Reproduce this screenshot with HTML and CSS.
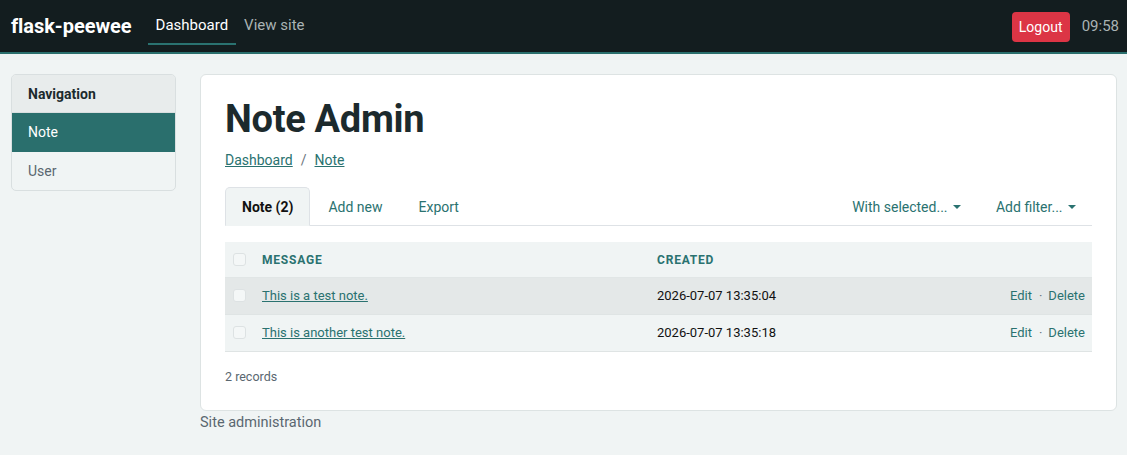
FILE: index.html
```html
<!DOCTYPE html>
<html>
<head>
<meta charset="utf-8">
<link rel="stylesheet" href="styles.css">
</head>
<body>
<header class="topbar">
  <div class="brand">flask-peewee</div>
  <nav class="topnav">
    <a class="toplink active">Dashboard</a>
    <a class="toplink">View site</a>
  </nav>
  <div class="topright">
    <button class="logout">Logout</button>
    <span class="clock">09:58</span>
  </div>
</header>
<div class="page">
  <aside class="sidebar">
    <div class="side-head">Navigation</div>
    <a class="side-item active">Note</a>
    <a class="side-item">User</a>
  </aside>
  <div class="main">
    <section class="card">
      <h1 class="title">Note Admin</h1>
      <div class="crumbs"><a class="crumb">Dashboard</a><span class="sep">/</span><a class="crumb">Note</a></div>
      <div class="tabs">
        <a class="tab active">Note (2)</a>
        <a class="tab">Add new</a>
        <a class="tab">Export</a>
        <span class="spacer"></span>
        <a class="tab drop">With selected... <span class="caret"></span></a>
        <a class="tab drop">Add filter... <span class="caret"></span></a>
      </div>
      <table class="grid">
        <thead>
          <tr><th class="cb"><span class="box"></span></th><th class="msg">Message</th><th class="created">Created</th><th class="acts"></th></tr>
        </thead>
        <tbody>
          <tr class="hover"><td class="cb"><span class="box"></span></td><td class="msg"><a class="link">This is a test note.</a></td><td class="created">2026-07-07 13:35:04</td><td class="acts"><a class="act">Edit</a><span class="dot">·</span><a class="act">Delete</a></td></tr>
          <tr><td class="cb"><span class="box"></span></td><td class="msg"><a class="link">This is another test note.</a></td><td class="created">2026-07-07 13:35:18</td><td class="acts"><a class="act">Edit</a><span class="dot">·</span><a class="act">Delete</a></td></tr>
        </tbody>
      </table>
      <div class="count">2 records</div>
    </section>
    <footer class="foot">Site administration</footer>
  </div>
</div>
</body>
</html>
```
FILE: styles.css
```css
* { box-sizing: border-box; }
html, body { margin: 0; padding: 0; }
body {
  font-family: Roboto, "Liberation Sans", sans-serif;
  font-size: 14px;
  color: #212529;
  background: #f0f4f4;
  height: 455px;
  overflow: hidden;
}
a { text-decoration: none; cursor: pointer; }

.topbar {
  height: 54px;
  background: #131d1f;
  border-bottom: 2px solid #2a6f6d;
  display: flex;
  align-items: center;
  padding: 0 8px 0 11px;
}
.brand {
  color: #fff;
  font-size: 20px;
  font-weight: 700;
  margin-right: 16px;
  letter-spacing: -0.05px;
}
.topnav { display: flex; align-self: stretch; }
.toplink {
  color: #aab3b4;
  font-size: 15px;
  padding: 0 8px;
  display: flex;
  align-items: center;
  height: 45px;
  padding-top: 6px;
  border-bottom: 2px solid transparent;
  align-self: flex-start;
}
.toplink.active { color: #fff; border-bottom-color: #2a7270; }
.topright { margin-left: auto; display: flex; align-items: center; gap: 12px; }
.logout {
  background: #dc3545;
  color: #fff;
  border: 0;
  border-radius: 4px;
  font-family: inherit;
  font-size: 14px;
  height: 30px;
  width: 58px;
  padding: 0;
  margin-top: 1px;
}
.clock { color: #aab3b4; font-size: 15px; }

.page {
  display: flex;
  align-items: flex-start;
  gap: 24px;
  padding: 20px 10px 0 11px;
}
.sidebar {
  width: 165px;
  flex: none;
  border: 1px solid #d9dfe0;
  border-radius: 5px;
  overflow: hidden;
  background: #f0f4f4;
}
.side-head {
  background: #e8ecec;
  font-weight: 700;
  color: #1c2a2d;
  height: 38px;
  line-height: 38px;
  padding-left: 16px;
  border-bottom: 1px solid #d9dfe0;
}
.side-item {
  display: block;
  height: 38px;
  line-height: 38px;
  padding-left: 16px;
  color: #5a6770;
  font-size: 14px;
}
.side-item.active { background: #2a6f6d; color: #fff; height: 39px; line-height: 38px; }

.main { flex: 1; min-width: 0; }
.card {
  background: #fff;
  border: 1px solid #dde3e3;
  border-radius: 6px;
  padding: 21px 24px 26px 24px;
}
.title {
  margin: 0;
  font-size: 38px;
  line-height: 46px;
  font-weight: 700;
  color: #1c2a2d;
  letter-spacing: -0.3px;
}
.crumbs { margin-top: 8px; line-height: 20px; font-size: 14px; }
.crumb { color: #2a7270; text-decoration: underline; }
.sep { color: #6c757d; margin: 0 8px; }

.tabs {
  margin-top: 17px;
  display: flex;
  border-bottom: 1px solid #dee2e6;
  height: 39px;
}
.tab {
  color: #2a7270;
  padding: 0 17px;
  line-height: 38px;
  font-size: 14px;
  border: 1px solid transparent;
  border-radius: 5px 5px 0 0;
  margin-bottom: -1px;
}
.tab.active {
  background: #f0f4f4;
  border-color: #dee2e6 #dee2e6 #f0f4f4;
  color: #111;
  font-weight: 700;
  padding: 0 16px;
}
.spacer { flex: 1; }
.tab.drop { padding: 0 16px 0 18px; }
.tab.drop:last-child { padding-right: 15px; padding-left: 17px; }
.caret {
  display: inline-block;
  width: 0; height: 0;
  border-left: 4px solid transparent;
  border-right: 4px solid transparent;
  border-top: 4px solid #2a7270;
  vertical-align: 3px;
  margin-left: 2px;
}

.grid {
  margin-top: 16px;
  width: 100%;
  border-collapse: collapse;
  font-size: 13px;
}
.grid th, .grid td { padding: 0; text-align: left; }
.grid thead tr { background: #f0f4f4; height: 35px; }
.grid th {
  color: #2a7270;
  font-size: 12px;
  font-weight: 700;
  text-transform: uppercase;
  letter-spacing: 0.8px;
  padding-top: 1px;
  border-bottom: 1px solid #e1e6e6;
}
.grid tbody tr { background: #f0f4f4; height: 37px; }
.grid tbody tr.hover { background: #e4e8e8; height: 37px; }
.grid td { border-bottom: 1px solid #dfe4e4; }
.cb { width: 37px; padding-left: 8px !important; }
.box {
  display: block;
  width: 13px; height: 13px;
  border: 1px solid #dde2e3;
  border-radius: 3px;
  background: #f4f7f7;
}
.msg { width: 395px; }
.link { color: #2a7270; text-decoration: underline; }
.created { color: #111; }
.acts { text-align: right !important; padding-right: 7px !important; }
.act { color: #2a7270; }
.dot { color: #6c757d; margin: 0 6px 0 7px; }

.count { margin-top: 17px; font-size: 12.5px; color: #5a6770; }
.foot { margin-top: 3px; color: #5a6770; font-size: 14.5px; }
```
